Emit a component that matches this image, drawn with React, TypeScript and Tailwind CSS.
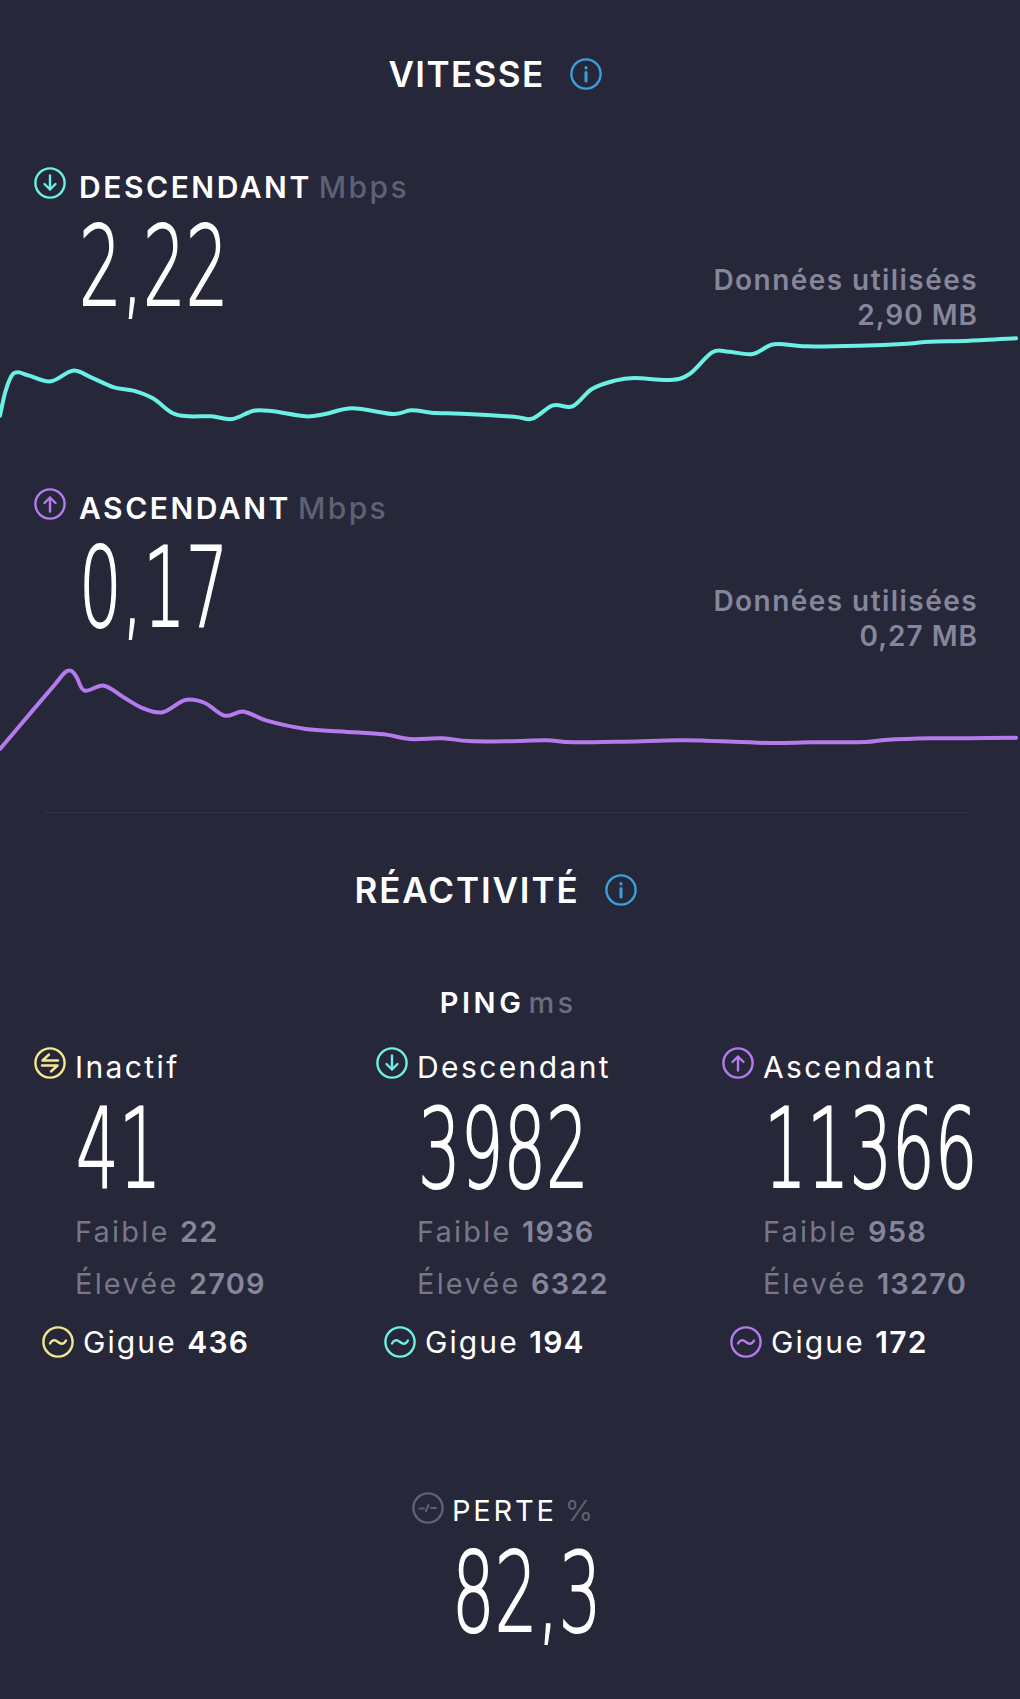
const smooth = (p: number[][]) => {
  let d = `M${p[0][0]} ${p[0][1]}`;
  for (let i = 0; i < p.length - 1; i++) {
    const a = p[Math.max(i - 1, 0)], b = p[i], c = p[i + 1], e = p[Math.min(i + 2, p.length - 1)];
    const k = 6;
    d += ` C${b[0] + (c[0] - a[0]) / k} ${b[1] + (c[1] - a[1]) / k} ${c[0] - (e[0] - b[0]) / k} ${c[1] - (e[1] - b[1]) / k} ${c[0]} ${c[1]}`;
  }
  return d;
};

const down = [[0,260],[8,190],[18,140],[28,130],[45,140],[78,157],[112,125],[140,145],[175,175],[205,185],[235,208],[265,252],[290,262],[325,262],[357,270],[390,245],[420,247],[470,262],[500,255],[542,238],[605,255],[632,244],[670,252],[710,254],[790,263],[818,269],[850,229],[880,232],[910,180],[945,155],[975,147],[1030,153],[1060,135],[1095,70],[1120,68],[1157,75],[1190,46],[1240,52],[1320,50],[1395,44],[1430,38],[1490,35],[1562,28]];
const up = [[0,300],[50,185],[85,105],[100,70],[110,66],[118,85],[130,125],[160,110],[190,145],[220,178],[250,190],[285,153],[315,162],[345,200],[375,188],[410,215],[470,240],[530,248],[590,256],[630,270],[680,268],[720,276],[780,277],[840,274],[880,280],[960,278],[1040,274],[1085,275],[1180,282],[1250,280],[1330,279],[1360,273],[1430,268],[1490,268],[1562,266]];

type K = "down" | "up" | "swap" | "wave" | "info" | "loss";
const Icon = ({ kind, color, size = 32 }: { kind: K; color: string; size?: number }) => (
  <svg width={size} height={size} viewBox="0 0 32 32" fill="none" stroke={color} strokeWidth="2.4" strokeLinecap="round" strokeLinejoin="round" className="shrink-0">
    <circle cx="16" cy="16" r="14.6" />
    {kind === "down" && <path d="M16 8.5v14M10.5 17l5.5 5.5 5.5-5.5" />}
    {kind === "up" && <path d="M16 23.5v-14M10.5 15l5.5-5.5 5.5 5.5" />}
    {kind === "swap" && <path d="M24 13.500H8.500L15 7.500M8 18.500h15.500L17 24.500" />}
    {kind === "wave" && <path d="M8 17.5c2-4 5-4 8-1.500s6 2.500 8-1.500" />}
    {kind === "info" && <><path d="M16 14.500v8.500" strokeWidth="3" /><path d="M16 9.500v.4" strokeWidth="3.200" /></>}
    {kind === "loss" && <path d="M7.500 16.500h4.500M14 19l2.500-6M19 16h5" strokeWidth="2" />}
  </svg>
);

const Big = ({ children, w }: { children: string; w: string }) => (
  <div className={`h-[118px] ${w} overflow-visible`}>
    <div className="origin-top-left scale-x-[0.61] whitespace-nowrap text-[110px] leading-[118px] font-extralight text-white [-webkit-text-stroke:2px_white] [font-family:'DejaVu_Sans',sans-serif]">
      {children}
    </div>
  </div>
);

const Chart = ({ pts, h, vb, color }: { pts: number[][]; h: string; vb: string; color: string }) => (
  <svg viewBox={vb} preserveAspectRatio="none" className={`block w-[1020px] ${h}`} fill="none">
    <path d={smooth(pts)} stroke={color} strokeWidth="4" strokeLinecap="round" strokeLinejoin="round" vectorEffect="non-scaling-stroke" />
  </svg>
);

const Speed = ({ kind, color, label, value, used }: { kind: K; color: string; label: string; value: string; used: string }) => (
  <div className="flex justify-between pl-[34px] pr-[42px]">
    <div>
      <div className="flex h-[36px] items-start">
        <Icon kind={kind} color={color} />
        <div className="ml-[13px] mt-[2px] flex items-baseline text-[30px] leading-[36px]">
          <span className="font-semibold tracking-[2.55px] text-white">{label}</span>
          <span className="ml-[7px] font-medium tracking-[2.4px] text-[#5f6075]">Mbps</span>
        </div>
      </div>
      <div className="ml-[45px] mt-[5px]"><Big w="w-[200px]">{value}</Big></div>
    </div>
    <div className="mt-[96px] text-right text-[28px] leading-[35px] font-semibold tracking-[1.45px] text-[#85869b]">
      <div>Données utilisées</div>
      <div className="tracking-[1px]">{used}</div>
    </div>
  </div>
);

const Ping = ({ kind, color, label, value, lo, hi, jitter }: { kind: K; color: string; label: string; value: string; lo: string; hi: string; jitter: string }) => (
  <div>
    <div className="flex h-[36px] items-start">
      <Icon kind={kind} color={color} />
      <span className="ml-[9px] mt-[2px] text-[30px] leading-[36px] tracking-[2.4px] text-white">{label}</span>
    </div>
    <div className="ml-[42px] mt-[7px]"><Big w="w-[220px]">{value}</Big></div>
    <div className="ml-[41px] mt-[-2px] text-[29px] leading-[52px] tracking-[2.2px] text-[#767789]">
      <div>Faible <b className="font-semibold tracking-[1.2px] text-[#85869b]">{lo}</b></div>
      <div>Élevée <b className="font-semibold tracking-[1.2px] text-[#85869b]">{hi}</b></div>
    </div>
    <div className="ml-[8px] mt-[14px] flex h-[36px] items-center">
      <Icon kind="wave" color={color} />
      <span className="ml-[9px] text-[30px] leading-[36px] tracking-[2.1px] text-white">Gigue <b className="font-semibold tracking-[1.2px]">{jitter}</b></span>
    </div>
  </div>
);

export default function App() {
  return (
    <div className="h-[1699px] w-[1020px] overflow-hidden bg-[#262739] [font-family:Inter,sans-serif]">
      <div className="mt-[56px] flex h-[36px] items-center justify-center pr-[29px]">
        <span className="text-[35px] leading-[44px] font-semibold tracking-[1.4px] text-white">VITESSE</span>
        <span className="ml-[26px]"><Icon kind="info" color="#3a9fde" /></span>
      </div>
      <div className="mt-[75px]">
        <Speed kind="down" color="#6af0e4" label="DESCENDANT" value="2,22" used="2,90 MB" />
      </div>
      <div className="mt-[-4px]">
        <Chart pts={down} h="h-[130px]" vb="0 0 1568 390" color="#6af0e4" />
      </div>
      <div className="mt-[29px]">
        <Speed kind="up" color="#b57bee" label="ASCENDANT" value="0,17" used="0,27 MB" />
      </div>
      <div className="mt-[-5px]">
        <Chart pts={up} h="h-[163px]" vb="0 0 1568 489" color="#b57bee" />
      </div>
      <div className="ml-[45px] mr-[53px] h-[1px] bg-[#33344a]" />
      <div className="mt-[59px] flex h-[36px] items-center justify-center pr-[29px]">
        <span className="text-[35px] leading-[44px] font-semibold tracking-[1.9px] text-white">RÉACTIVITÉ</span>
        <span className="ml-[25px]"><Icon kind="info" color="#3a9fde" /></span>
      </div>
      <div className="mt-[77px] flex h-[36px] items-center justify-center pr-[4px] text-[29px]">
        <span className="font-semibold tracking-[3.6px] text-white">PING</span>
        <span className="ml-[4px] font-medium tracking-[3.2px] text-[#6b6c80]">ms</span>
      </div>
      <div className="mt-[26px] grid grid-cols-[342px_346px_1fr] pl-[34px]">
        <Ping kind="swap" color="#f4e88f" label="Inactif" value="41" lo="22" hi="2709" jitter="436" />
        <Ping kind="down" color="#6af0e4" label="Descendant" value="3982" lo="1936" hi="6322" jitter="194" />
        <Ping kind="up" color="#b57bee" label="Ascendant" value="11366" lo="958" hi="13270" jitter="172" />
      </div>
      <div className="mt-[133px] flex justify-center pl-[1px]">
        <div>
          <div className="flex h-[36px] items-center">
            <span className="mb-[6px] ml-[3px]"><Icon kind="loss" color="#5f6075" /></span>
            <span className="ml-[8px] text-[29px] tracking-[2.8px] text-white">PERTE</span>
            <span className="ml-[8px] text-[29px] tracking-[1px] text-[#5f6075]">%</span>
          </div>
          <div className="ml-[43px] mt-[5px]"><Big w="w-[160px]">82,3</Big></div>
        </div>
      </div>
    </div>
  );
}
